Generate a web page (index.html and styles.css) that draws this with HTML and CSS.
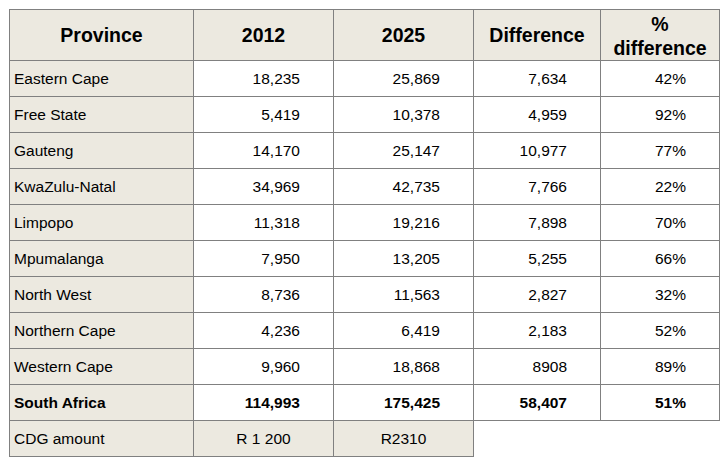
FILE: index.html
```html
<!DOCTYPE html>
<html>
<head>
<meta charset="utf-8">
<link rel="stylesheet" href="styles.css">
</head>
<body>
<table class="data">
  <colgroup>
    <col class="c1"><col class="c2"><col class="c3"><col class="c4"><col class="c5">
  </colgroup>
  <thead>
    <tr>
      <th>Province</th>
      <th>2012</th>
      <th>2025</th>
      <th>Difference</th>
      <th class="pct">% difference</th>
    </tr>
  </thead>
  <tbody>
    <tr><td class="name">Eastern Cape</td><td class="num">18,235</td><td class="num">25,869</td><td class="num">7,634</td><td class="num">42%</td></tr>
    <tr><td class="name">Free State</td><td class="num">5,419</td><td class="num">10,378</td><td class="num">4,959</td><td class="num">92%</td></tr>
    <tr><td class="name">Gauteng</td><td class="num">14,170</td><td class="num">25,147</td><td class="num">10,977</td><td class="num">77%</td></tr>
    <tr><td class="name">KwaZulu-Natal</td><td class="num">34,969</td><td class="num">42,735</td><td class="num">7,766</td><td class="num">22%</td></tr>
    <tr><td class="name">Limpopo</td><td class="num">11,318</td><td class="num">19,216</td><td class="num">7,898</td><td class="num">70%</td></tr>
    <tr><td class="name">Mpumalanga</td><td class="num">7,950</td><td class="num">13,205</td><td class="num">5,255</td><td class="num">66%</td></tr>
    <tr><td class="name">North West</td><td class="num">8,736</td><td class="num">11,563</td><td class="num">2,827</td><td class="num">32%</td></tr>
    <tr><td class="name">Northern Cape</td><td class="num">4,236</td><td class="num">6,419</td><td class="num">2,183</td><td class="num">52%</td></tr>
    <tr><td class="name">Western Cape</td><td class="num">9,960</td><td class="num">18,868</td><td class="num">8908</td><td class="num">89%</td></tr>
    <tr class="total"><td class="name">South Africa</td><td class="num">114,993</td><td class="num">175,425</td><td class="num">58,407</td><td class="num">51%</td></tr>
    <tr class="cdg"><td class="name">CDG amount</td><td class="mid">R 1 200</td><td class="mid">R2310</td><td class="empty"></td><td class="empty"></td></tr>
  </tbody>
</table>
</body>
</html>
```

FILE: styles.css
```css
html, body {
  margin: 0;
  padding: 0;
  background: #ffffff;
}
body {
  padding: 9px 0 0 9px;
  font-family: "Liberation Sans", Arial, sans-serif;
  color: #000;
}
.data {
  border-collapse: collapse;
  table-layout: fixed;
  width: 710px;
}
.c1 { width: 184px; }
.c2 { width: 140px; }
.c3 { width: 140px; }
.c4 { width: 127px; }
.c5 { width: 119px; }
.data th,
.data td {
  border: 1px solid #808080;
  padding: 0;
  vertical-align: middle;
}
.data th {
  background: #ece9e0;
  font-size: 19.5px;
  font-weight: bold;
  text-align: center;
  height: 50px;
  line-height: 23px;
  padding: 0 2px;
}
.data th.pct {
  line-height: 24px;
  padding-top: 2px;
  height: 48px;
}
.data td {
  height: 34px;
  font-size: 15.5px;
  padding-top: 1px;
}
.data td.name {
  background: #ece9e0;
  padding-left: 4px;
}
.data td.num {
  text-align: right;
  padding-right: 33px;
}
.data td.mid {
  text-align: center;
  background: #ece9e0;
}
.data td.empty {
  border: none;
  background: transparent;
}
.total td {
  font-weight: bold;
}
```
